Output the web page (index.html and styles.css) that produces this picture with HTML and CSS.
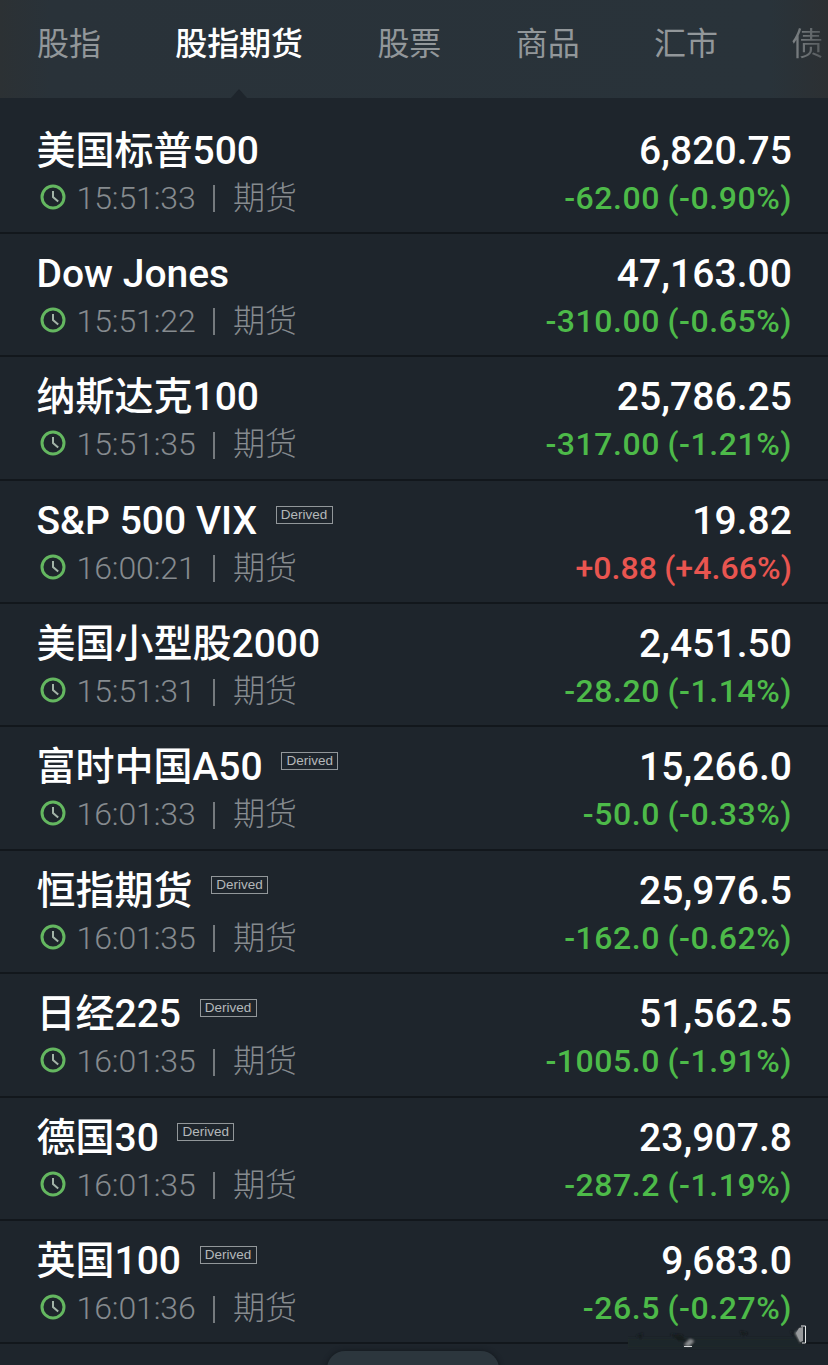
FILE: index.html
```
<!DOCTYPE html>
<html lang="zh-CN">
<head>
<meta charset="utf-8">
<title>股指期货</title>
<link rel="stylesheet" href="styles.css">
</head>
<body>
<svg class="defs" aria-hidden="true"><symbol id="clock" viewBox="0 0 26 26"><circle cx="13" cy="13" r="11" fill="none" stroke="#64b760" stroke-width="3"/><path d="M13 7v6l5.2 4.6" fill="none" stroke="#a3b3a8" stroke-width="2"/></symbol></svg>
<div class="screen">
<nav class="tabs"><a>股指</a><a class="active">股指期货</a><a>股票</a><a>商品</a><a>汇市</a><a class="faded">债</a></nav>
<main class="list">
<section class="row"><div class="left"><h2>美国标普500</h2><p class="meta"><svg><use href="#clock"/></svg><time>15:51:33</time><i></i><span>期货</span></p></div><div class="right"><b>6,820.75</b><em>-62.00 (-0.90%)</em></div></section>
<section class="row"><div class="left"><h2>Dow Jones</h2><p class="meta"><svg><use href="#clock"/></svg><time>15:51:22</time><i></i><span>期货</span></p></div><div class="right"><b>47,163.00</b><em>-310.00 (-0.65%)</em></div></section>
<section class="row"><div class="left"><h2>纳斯达克100</h2><p class="meta"><svg><use href="#clock"/></svg><time>15:51:35</time><i></i><span>期货</span></p></div><div class="right"><b>25,786.25</b><em>-317.00 (-1.21%)</em></div></section>
<section class="row"><div class="left"><h2>S&amp;P 500 VIX<small>Derived</small></h2><p class="meta"><svg><use href="#clock"/></svg><time>16:00:21</time><i></i><span>期货</span></p></div><div class="right"><b>19.82</b><em class="up">+0.88 (+4.66%)</em></div></section>
<section class="row"><div class="left"><h2>美国小型股2000</h2><p class="meta"><svg><use href="#clock"/></svg><time>15:51:31</time><i></i><span>期货</span></p></div><div class="right"><b>2,451.50</b><em>-28.20 (-1.14%)</em></div></section>
<section class="row"><div class="left"><h2>富时中国A50<small>Derived</small></h2><p class="meta"><svg><use href="#clock"/></svg><time>16:01:33</time><i></i><span>期货</span></p></div><div class="right"><b>15,266.0</b><em>-50.0 (-0.33%)</em></div></section>
<section class="row"><div class="left"><h2>恒指期货<small>Derived</small></h2><p class="meta"><svg><use href="#clock"/></svg><time>16:01:35</time><i></i><span>期货</span></p></div><div class="right"><b>25,976.5</b><em>-162.0 (-0.62%)</em></div></section>
<section class="row"><div class="left"><h2>日经225<small>Derived</small></h2><p class="meta"><svg><use href="#clock"/></svg><time>16:01:35</time><i></i><span>期货</span></p></div><div class="right"><b>51,562.5</b><em>-1005.0 (-1.91%)</em></div></section>
<section class="row"><div class="left"><h2>德国30<small>Derived</small></h2><p class="meta"><svg><use href="#clock"/></svg><time>16:01:35</time><i></i><span>期货</span></p></div><div class="right"><b>23,907.8</b><em>-287.2 (-1.19%)</em></div></section>
<section class="row"><div class="left"><h2>英国100<small>Derived</small></h2><p class="meta"><svg><use href="#clock"/></svg><time>16:01:36</time><i></i><span>期货</span></p></div><div class="right"><b>9,683.0</b><em>-26.5 (-0.27%)</em></div></section>
</main>
<div class="handle"></div>
<svg class="marks" viewBox="0 0 190 30" aria-hidden="true"><defs><filter id="soft"><feGaussianBlur stdDeviation="1.3"/></filter></defs><g filter="url(#soft)"><path d="M-1 16h175v10H-1z" fill="#1e252b"/><path d="M8 14l7-3-2 6zM42 12l9 7 7 0-4-6zM112 9l8 2-5 4zM162 9l8 2v8z" fill="#161b1f"/><path d="M62 17l4 2-5 5-5-1zM173 6l-6 5 6 10z" fill="#8c9092"/></g><path d="M56 24.500h8" stroke="#d8dbdb"/><path d="M173 4h4.500v17H174" fill="none" stroke="#e9ebeb"/><path d="M171 6l4-1v14l-3 1-4-9z" fill="#97999b"/></svg>
</div>
</body>
</html>
```
FILE: styles.css
```
* { box-sizing: border-box; }
body { margin: 0; background: #1e252c; font-family: Roboto, "Noto Sans CJK SC", sans-serif; }
.defs { display: none; }
.screen { position: relative; width: 828px; height: 1365px; overflow: hidden; }
.tabs {
  display: flex; gap: 74.500px; height: 98px; padding: 21px 0 0 37px;
  background: linear-gradient(90deg, #2c3134 0, #293239 50px, #29333a 770px, #2c3033 828px);
  color: #92979a; font-size: 32px; line-height: 46px; white-space: nowrap; overflow: hidden;
}
.tabs a { position: relative; flex: none; letter-spacing: -0.1px; }
.tabs .active { color: #fff; font-weight: 500; }
.tabs .active::after {
  content: ""; position: absolute; left: 56px; top: 68px;
  border: solid transparent; border-width: 0 8px 9px; border-bottom-color: #1e252c;
}
.tabs .faded {
  margin-left: -1px; color: transparent;
  background: linear-gradient(90deg, #7e8386, #54595c); background-clip: text; -webkit-background-clip: text;
}
.list { display: flex; flex-direction: column; padding-top: 12.500px; }
.row {
  display: flex; justify-content: space-between; flex: none; height: 123.400px;
  padding: 16px 36px 0 36.500px; border-bottom: 2px solid #12171c;
}
h2 { display: flex; margin: 0; height: 48px; color: #fff; font-size: 39px; font-weight: 500; line-height: 48px; white-space: nowrap; }
small {
  display: block; width: 57px; height: 18px; margin: 9px 0 0 18.500px; border: 1px solid #92979a;
  color: #b4b8ba; font: 13.500px/16px "Liberation Sans", Arial, sans-serif; text-align: center;
}
.meta { display: flex; align-items: center; margin: -1px 0 0; height: 48px; color: #868b8f; font-size: 32px; font-weight: 300; line-height: 48px; }
.meta svg { width: 26px; height: 26px; margin: -2px 11px 0 3px; }
.meta time { width: 118px; letter-spacing: -.1px; }
.meta i { width: 2px; height: 27px; margin: 2px 18px 0 18.500px; background: #757a7e; }
.right { display: flex; flex-direction: column; align-items: flex-end; }
.right b { height: 48px; color: #fff; font-size: 39px; font-weight: 500; line-height: 48px; letter-spacing: .05px; }
.right em { height: 48px; margin-top: -1px; color: #4dba49; font-size: 32px; font-style: normal; font-weight: 500; line-height: 48px; letter-spacing: .55px; word-spacing: -1px; }
.right .up { color: #e95550; letter-spacing: .1px; }
.handle { position: absolute; left: 327px; top: 1351px; width: 172px; height: 24px; border-radius: 18px 18px 0 0; background: #2c363d; box-shadow: 0 0 5px #12171c; }
.marks { position: absolute; left: 628px; top: 1322px; width: 190px; height: 30px; }
```
